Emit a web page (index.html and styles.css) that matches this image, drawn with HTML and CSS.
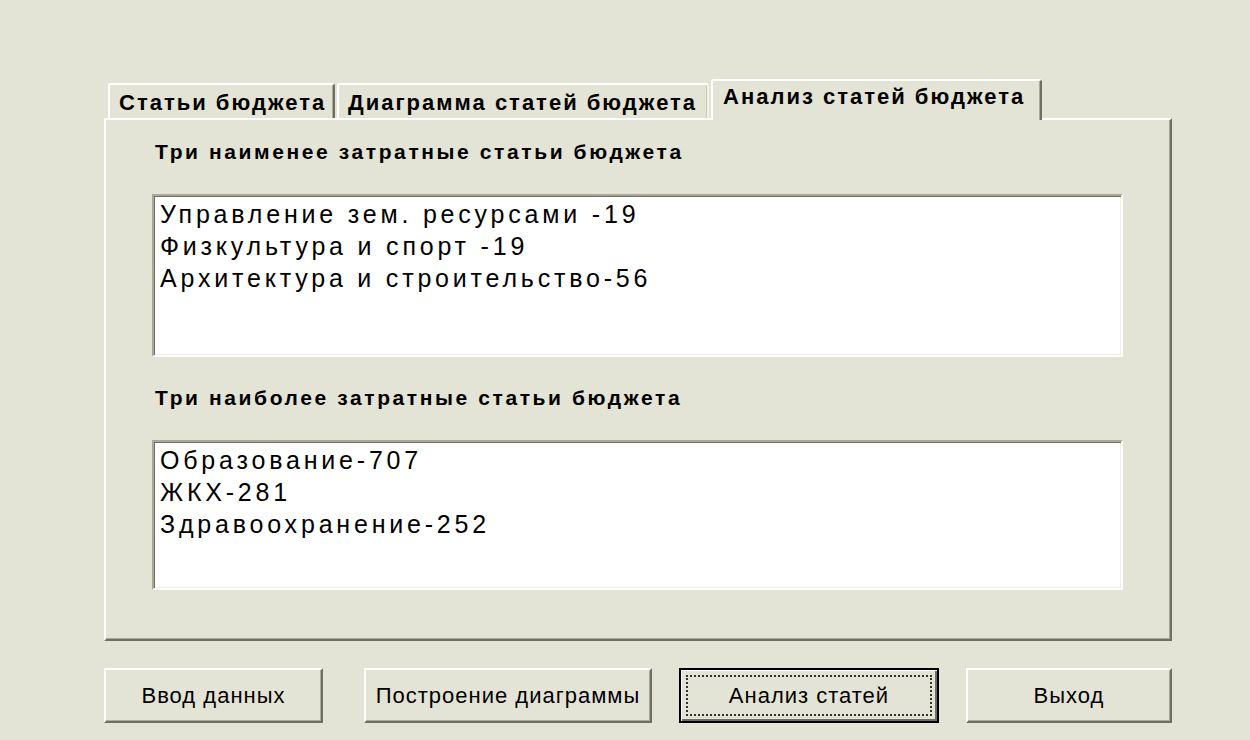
FILE: index.html
```html
<!DOCTYPE html>
<html lang="ru">
<head>
<meta charset="utf-8">
<title>Анализ статей бюджета</title>
<link rel="stylesheet" href="styles.css">
</head>
<body>
<div class="dialog">
  <div class="tabs">
    <div class="tab tab-items">Статьи бюджета</div>
    <div class="tab tab-chart">Диаграмма статей бюджета</div>
    <div class="tab tab-analysis active">Анализ статей бюджета</div>
  </div>
  <div class="panel">
    <div class="caption caption-low">Три наименее затратные статьи бюджета</div>
    <div class="listbox listbox-low">
      <div class="item">Управление зем. ресурсами -19</div>
      <div class="item">Физкультура и спорт -19</div>
      <div class="item">Архитектура и строительство-56</div>
    </div>
    <div class="caption caption-high">Три наиболее затратные статьи бюджета</div>
    <div class="listbox listbox-high">
      <div class="item">Образование-707</div>
      <div class="item">ЖКХ-281</div>
      <div class="item">Здравоохранение-252</div>
    </div>
  </div>
  <div class="buttons">
    <button class="btn btn-input">Ввод данных</button>
    <button class="btn btn-chart">Построение диаграммы</button>
    <button class="btn btn-analysis default"><span class="focus">Анализ статей</span></button>
    <button class="btn btn-exit">Выход</button>
  </div>
</div>
</body>
</html>
```

FILE: styles.css
```css
html, body {
  margin: 0;
  padding: 0;
  background: #e4e4d6;
}

body {
  font-family: "Liberation Sans", Arial, sans-serif;
  color: #000;
  width: 1250px;
  height: 740px;
  overflow: hidden;
}

.dialog {
  padding: 79px 0 0 104px;
  width: 1068px;
}

/* tab strip */
.tabs {
  display: flex;
  align-items: flex-end;
  height: 41px;
  margin-bottom: -2px;
  padding-left: 4px;
  position: relative;
  z-index: 1;
}

.tab {
  box-sizing: border-box;
  height: 35px;
  margin-bottom: 2px;
  margin-right: 2px;
  padding: 5px 0 0 9px;
  font-weight: bold;
  font-size: 22px;
  letter-spacing: 2px;
  white-space: nowrap;
  background: #e4e4d6;
  border-top: 2px solid #fff;
  border-left: 2px solid #fff;
  border-right: 2px solid #716f64;
  box-shadow: inset -1px 0 0 #aca899;
  border-radius: 3px 3px 0 0;
}

.tab-items { width: 227px; }

.tab-chart {
  width: 372px;
  border-right: 2px solid #f4f3ea;
  box-shadow: inset -1px 0 0 #c9c8b8;
}

.tab.active {
  width: 331px;
  height: 41px;
  margin-bottom: 0;
  padding: 3px 0 0 10px;
}

/* tab page */
.panel {
  box-sizing: border-box;
  height: 523px;
  padding: 0 47px 0 46px;
  border-top: 2px solid #fff;
  border-left: 2px solid #fff;
  border-right: 2px solid #716f64;
  border-bottom: 2px solid #716f64;
  box-shadow: inset -1px -1px 0 #aca899;
}

.caption {
  font-weight: bold;
  font-size: 21px;
  letter-spacing: 2.6px;
  line-height: 26px;
  padding-left: 3px;
  white-space: nowrap;
}

.caption-low { margin-top: 19px; }
.caption-high { margin-top: 28px; }

.listbox {
  box-sizing: border-box;
  background: #fff;
  border-top: 2px solid #aca899;
  border-left: 2px solid #aca899;
  border-right: 2px solid #fff;
  border-bottom: 2px solid #fff;
  box-shadow: inset 1px 1px 0 #716f64, inset -1px -1px 0 #f1efe2;
  padding: 2px 0 0 6px;
  font-size: 25px;
  letter-spacing: 3.8px;
  line-height: 32px;
  white-space: nowrap;
}

.listbox-low {
  height: 163px;
  margin-top: 29px;
}

.listbox-high {
  height: 150px;
  margin-top: 29px;
}

/* command buttons */
.buttons {
  display: flex;
  margin-top: 27px;
}

.btn {
  box-sizing: border-box;
  height: 55px;
  padding: 0;
  margin: 0;
  font-family: "Liberation Sans", Arial, sans-serif;
  font-size: 22px;
  letter-spacing: 1px;
  color: #000;
  background: #e4e4d6;
  border-top: 2px solid #fff;
  border-left: 2px solid #fff;
  border-right: 2px solid #716f64;
  border-bottom: 2px solid #716f64;
  box-shadow: inset -1px -1px 0 #aca899;
  display: flex;
  align-items: center;
  justify-content: center;
}

.btn-input { width: 219px; }
.btn-chart { width: 288px; margin-left: 41px; }
.btn-analysis { width: 260px; margin-left: 27px; }
.btn-exit { width: 206px; margin-left: 27px; }

.btn.default {
  border: 2px solid #000;
  box-shadow: inset 1px 1px 0 #fff, inset -2px -2px 0 #716f64;
  padding: 5px;
}

.btn .focus {
  flex: 1;
  align-self: stretch;
  display: flex;
  align-items: center;
  justify-content: center;
  border: 2px dotted #333;
}
```
